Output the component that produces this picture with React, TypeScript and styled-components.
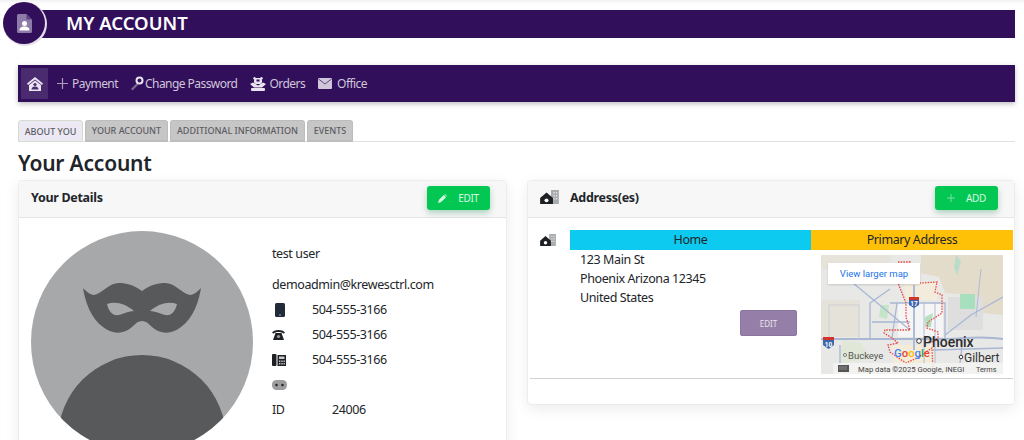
import React from "react";
import styled, { createGlobalStyle } from "styled-components";

const PURPLE = "#320f5a";
const INK = "#212529";
const FONT = '"Noto Sans", "Open Sans", sans-serif';

const GlobalStyle = createGlobalStyle`
  html, body {
    margin: 0;
    height: 440px;
    overflow: hidden;
    background: #fff;
  }
  body {
    font-family: ${FONT};
    color: ${INK};
    box-shadow: inset 0 4px 4px -3px rgba(0, 0, 0, 0.08);
  }
  * {
    box-sizing: border-box;
  }
  svg {
    display: block;
  }
`;

const DocPersonIcon = () => (
  <svg width="15" height="19" viewBox="0 0 15 19">
    <path d="M1.500 0H9.500L15 5.500V17.500a1.500 1.500 0 0 1-1.500 1.500H1.500A1.500 1.500 0 0 1 0 17.500V1.500A1.500 1.500 0 0 1 1.500 0Z" fill="#8f7ba9" />
    <path d="M9.500 0V5.500H15Z" fill="#5d4480" />
    <circle cx="7.500" cy="9.500" r="2.500" fill="#fff" />
    <path d="M2.500 16.500c0-3 2-4 5-4s5 1 5 4Z" fill="#fff" />
  </svg>
);

const HomeIcon = () => (
  <svg width="16" height="14" viewBox="0 0 16 14">
    <path d="M8 0 16 6.500 15 8 8 2.500 1 8 0 6.500Z" fill="#e9e4f0" />
    <path d="M8 3.500 14 8V14H2V8Z" fill="#e9e4f0" />
    <circle cx="8" cy="7.500" r="1.600" fill="#4a2b70" />
    <path d="M4.500 12.500c0-2 1.500-3 3.500-3s3.500 1 3.500 3Z" fill="#4a2b70" />
  </svg>
);

const PlusIcon = ({ color, size }: { color: string; size: number }) => (
  <svg width={size} height={size} viewBox="0 0 12 12">
    <path d="M6 0V12M0 6H12" stroke={color} strokeWidth="1.300" />
  </svg>
);

const KeyIcon = () => (
  <svg width="14" height="15" viewBox="0 0 14 15">
    <path d="M7 7 1 13l1.500 1.500L8.500 8.500Z" fill="#7d6b93" />
    <circle cx="9.500" cy="4.500" r="3" fill="none" stroke="#e9e4f0" strokeWidth="2" />
  </svg>
);

const OrdersIcon = () => (
  <svg width="16" height="14" viewBox="0 0 16 14">
    <circle cx="4.500" cy="1.200" r="1.200" fill="#e9e4f0" />
    <circle cx="11.500" cy="1.200" r="1.200" fill="#e9e4f0" />
    <rect x="4" y="1" width="8" height="6" rx="2" fill="#e9e4f0" />
    <rect x="6.500" y="2.500" width="3" height="2" fill="#320f5a" />
    <path d="M0 7 3 5.500 8 8.500 13 5.500 16 7 12 10.500H4Z" fill="#e9e4f0" />
    <rect x="1" y="11" width="14" height="3" rx="1" fill="#e9e4f0" />
  </svg>
);

const MailIcon = () => (
  <svg width="14" height="11" viewBox="0 0 14 11">
    <rect width="14" height="11" rx="1" fill="#cfc6db" />
    <path d="M0.500 1 7 6 13.500 1" fill="none" stroke="#320f5a" strokeWidth="0.700" />
  </svg>
);

const PencilIcon = () => (
  <svg width="9" height="9" viewBox="0 0 9 9">
    <path d="M0 9 1 5.800 5.800 1 8 3.200 3.200 8Z" fill="#d8f7e3" />
    <path d="M6.400 0.400 7 0 9 2 8.600 2.600Z" fill="#d8f7e3" />
  </svg>
);

const BuildingsIcon = ({ width }: { width: number }) => (
  <svg width={width} height={width * 0.78} viewBox="0 0 19 15">
    <rect x="11" y="0" width="8" height="15" fill="#a9abad" />
    <path d="M13.500 2h1.300v1.600h-1.300zM16 2h1.300v1.600H16zM13.500 5h1.300v1.600h-1.300zM16 5h1.300v1.600H16zM13.500 8h1.300v1.600h-1.300zM16 8h1.300v1.600H16z" fill="#e3e4e5" />
    <path d="M6.500 2.500 13 8V15H0V8Z" fill="#1d2024" />
    <circle cx="6.500" cy="10.500" r="2" fill="#fff" />
  </svg>
);

const MobileIcon = () => (
  <svg width="13" height="14" viewBox="0 0 13 14">
    <rect x="3" width="10" height="14" rx="1.500" fill="#212a38" />
    <rect x="7" y="11.500" width="2" height="1" fill="#aab" />
  </svg>
);

const RotaryIcon = () => (
  <svg width="13" height="11" viewBox="0 0 13 11">
    <path d="M0 4C1 0 12 0 13 4L11 4.500C10 2.500 3 2.500 2 4.500Z" fill="#1d2024" />
    <path d="M3.500 4h6L12 11H1Z" fill="#1d2024" />
    <circle cx="6.500" cy="7.500" r="1.600" fill="#9a9a9a" />
  </svg>
);

const DeskPhoneIcon = () => (
  <svg width="14" height="12" viewBox="0 0 14 12">
    <rect width="4.500" height="12" rx="1" fill="#1d2024" />
    <rect x="5.500" y="1" width="8.500" height="11" fill="#1d2024" />
    <rect x="7" y="2.500" width="5.500" height="2.500" fill="#c9c9c9" />
    <path d="M7 6.500h1.400v1.400H7zM9.300 6.500h1.400v1.400H9.300zM11.500 6.500h1.400v1.400h-1.400zM7 9h1.400v1.400H7zM9.300 9h1.400v1.400H9.300zM11.500 9h1.400v1.400h-1.400z" fill="#c9c9c9" />
  </svg>
);

const EyesIcon = () => (
  <svg width="15" height="10" viewBox="0 0 15 10">
    <rect width="15" height="10" rx="4.500" fill="#9d9d9f" />
    <circle cx="4.500" cy="5" r="1.300" fill="#26282c" />
    <circle cx="10.500" cy="5" r="1.300" fill="#26282c" />
  </svg>
);

const AvatarArt = () => (
  <svg width="222" height="222" viewBox="0 0 222 222">
    <defs>
      <clipPath id="avatar-clip">
        <circle cx="111" cy="111" r="111" />
      </clipPath>
    </defs>
    <g clipPath="url(#avatar-clip)">
      <rect width="222" height="222" fill="#a7a8aa" />
      <circle cx="111" cy="208" r="84" fill="#58595b" />
    </g>
    <path
      d="M111 60C103 54 95 52 88 52C78 52 72 62 63 64C59 64 55 60 52 57C54 70 60 88 72 96C82 104 93 103 101 96C105 92 107 90 111 90C115 90 117 92 121 96C129 103 140 104 150 96C162 88 168 70 170 57C167 60 163 64 159 64C150 62 144 52 134 52C127 52 119 54 111 60Z"
      fill="#58595b"
    />
    <path d="M76 73C84 70 94 72 103 80C96 80 90 85 84 84C80 83 77 78 76 73Z" fill="#a7a8aa" />
    <path d="M146 73C138 70 128 72 119 80C126 80 132 85 138 84C142 83 145 78 146 73Z" fill="#a7a8aa" />
  </svg>
);

// the embedded map: base areas, roads, city limit, then labels
const MapArt = () => (
  <svg width="182" height="119" viewBox="0 0 182 119" fontFamily='"Roboto", sans-serif'>
    <rect width="182" height="119" fill="#e8e8e6" />
    <path d="M100 0H182V60L160 58 150 40 124 38 118 22 100 18Z" fill="#e3dccb" />
    <path d="M0 0H70V6L40 14 0 14Z" fill="#e6e3da" />
    <path d="M0 45H39V82H0Z" fill="#e5e2da" />
    <path d="M127 42H162V75H127Z" fill="#dedede" />
    <rect x="139" y="39" width="15" height="15" fill="#a8e0bf" />
    <path d="M84 27H116V45H84Z" fill="#f3ecdc" />
    <path d="M77 48H122V82H77Z" fill="#f5f5f5" />
    <path d="M60 50 68 50 66 64 58 62Z" fill="#c4e6c6" />
    <path d="M104 62 112 58 110 72 104 72Z" fill="#b4e2c0" />
    <path d="M72 90H112V108H72Z" fill="#f4ecd8" />
    <path d="M22 85 40 88 50 104 18 108Z" fill="#e0e7d7" />
    <path d="M135 0 140 6 136 20 133 12Z" fill="#b9dcc8" />
    <g fill="none" stroke="#a9b7d4" strokeWidth="1.300">
      <path d="M0 84H120C140 84 160 80 182 84" strokeWidth="2" />
      <path d="M32 28 89 75" />
      <path d="M49 83V48L69 34M69 48H124V84" />
      <path d="M51 67H89M76 48 71 83" />
      <path d="M93 30V95" strokeWidth="1.800" />
      <path d="M103 48V108M114 48V108" strokeWidth="0.900" />
      <path d="M124 80 150 60 182 42" />
      <path d="M19 90V108M112 95 182 93M142 84 139 108" />
      <path d="M160 14 155 62" strokeWidth="0.900" />
      <path d="M8 50H38V84M8 50V84" stroke="#cbced3" strokeWidth="0.900" />
    </g>
    <g fill="none" stroke="#e9473f" strokeWidth="1.300" strokeDasharray="1.500 1.200">
      <path d="M77 7 89 7 87 15 77 28 81 38 85 48 85 62 89 75 64 75 63 78 71 83 77 88 67 90 69 97 76 102 85 108 96 103 111 93 112 118" />
      <path d="M77 28 85 28 99 28 116 27 114 37 121 40 121 58 107 67 106 73 117 77 117 83 109 88" />
    </g>
    <path d="M88 42H98V50L93 53 88 50Z" fill="#3c67ad" />
    <rect x="88" y="42" width="10" height="3" fill="#d0342c" />
    <path d="M2 82H13V90L7.500 94 2 90Z" fill="#3c67ad" />
    <rect x="2" y="82" width="11" height="3" fill="#d0342c" />
    <text x="93" y="51" fontSize="6.500" fontWeight="700" fill="#fff" textAnchor="middle">17</text>
    <text x="7.500" y="91.500" fontSize="6.500" fontWeight="700" fill="#fff" textAnchor="middle">10</text>
    <circle cx="98" cy="86" r="2.300" fill="#fff" stroke="#333" />
    <text x="102" y="92" fontSize="14" fontWeight="500" fill="#2c2c2c">Phoenix</text>
    <circle cx="24" cy="100" r="1.500" fill="#fff" stroke="#555" strokeWidth="0.800" />
    <text x="27" y="104" fontSize="9.500" fill="#555">Buckeye</text>
    <circle cx="140" cy="102" r="1.800" fill="#fff" stroke="#333" />
    <text x="143" y="107" fontSize="12" fill="#333">Gilbert</text>
    <text x="73" y="102" fontSize="11.300" fontWeight="500">
      <tspan fill="#4285f4">G</tspan>
      <tspan fill="#ea4335">o</tspan>
      <tspan fill="#fbbc05">o</tspan>
      <tspan fill="#4285f4">g</tspan>
      <tspan fill="#34a853">l</tspan>
      <tspan fill="#ea4335">e</tspan>
    </text>
    <rect x="12" y="108" width="170" height="11" fill="#f3f3f1" opacity="0.850" />
    <rect x="17" y="110" width="11" height="7" fill="#555" />
    <path d="M18.500 112h8M18.500 114h8" stroke="#eee" strokeWidth="0.700" strokeDasharray="1 1" />
    <text x="37" y="116.500" fontSize="7.700" fill="#444">Map data ©2025 Google, INEGI</text>
    <text x="155" y="116.500" fontSize="7.300" fill="#444">Terms</text>
  </svg>
);

const Header = styled.header`
  height: 28px;
  margin: 10px 9px 0 18px;
  padding: 0 0 3px 48px;
  display: flex;
  align-items: center;
  position: relative;
  background: ${PURPLE};
  color: #fff;
  font-size: 18.500px;
  font-weight: 600;
`;

const HeaderBadge = styled.div`
  position: absolute;
  left: -15px;
  top: -8px;
  width: 42px;
  height: 42px;
  border-radius: 50%;
  display: flex;
  align-items: center;
  justify-content: center;
  background: ${PURPLE};
  box-shadow: 1px 1px 0 1px #e4dfea;
`;

const NavBar = styled.nav`
  height: 37px;
  margin: 27px 9px 0 18px;
  padding: 3px;
  display: flex;
  align-items: stretch;
  background: ${PURPLE};
  box-shadow: 0 2px 5px rgba(0, 0, 0, 0.25);
`;

const NavHome = styled.div`
  width: 27px;
  display: flex;
  align-items: center;
  justify-content: center;
  background: #4a2b70;
`;

const NavItem = styled.a<{ $gap: number; $left: number }>`
  margin-left: ${({ $left }) => $left}px;
  display: flex;
  align-items: center;
  gap: ${({ $gap }) => $gap}px;
  color: #cfc6db;
  font-size: 12px;
  letter-spacing: -0.550px;
`;

const Tabs = styled.div`
  height: 22px;
  margin: 18px 9px 0 18px;
  display: flex;
  gap: 2px;
  border-bottom: 1px solid #dee2e6;
`;

const Tab = styled.div<{ $active?: boolean; $width: number }>`
  width: ${({ $width }) => $width}px;
  height: 22px;
  display: flex;
  align-items: center;
  justify-content: center;
  border: 1px solid ${({ $active }) => ($active ? "#d4dccf" : "#bdbdbd")};
  border-bottom-width: ${({ $active }) => ($active ? "1px" : "2px")};
  border-radius: 3px 3px 0 0;
  background: ${({ $active }) => ($active ? "#ece9f4" : "#c6c6c6")};
  color: #5c5c62;
  font-size: 9px;
  font-weight: 500;
  white-space: nowrap;
`;

const PageTitle = styled.h2`
  margin: 6px 0 0 18px;
  height: 32px;
  font-size: 21px;
  line-height: 30px;
  font-weight: 600;
  letter-spacing: -0.200px;
`;

const Columns = styled.main`
  margin: 0 9px 0 18px;
  display: grid;
  grid-template-columns: 489px 488px;
  gap: 20px;
  align-items: start;
`;

const Card = styled.section`
  background: #fff;
  border: 1px solid #eceded;
  border-radius: 4px;
  box-shadow: 0 4px 14px rgba(0, 0, 0, 0.08);
  overflow: hidden;
`;

const CardHead = styled.div`
  height: 37px;
  padding: 5px 16px 0 12px;
  display: flex;
  justify-content: space-between;
  background: #f7f7f7;
  border-bottom: 1px solid #e6e6e6;
`;

const CardTitle = styled.div`
  display: flex;
  align-items: center;
  gap: 11px;
  height: 22px;
  font-size: 12.500px;
  font-weight: 700;
  letter-spacing: -0.300px;
`;

const GreenButton = styled.button`
  width: 63px;
  height: 24px;
  display: flex;
  align-items: center;
  justify-content: center;
  gap: 11px;
  padding: 0;
  border: 0;
  border-radius: 3px;
  background: #02c853;
  color: #d8f7e3;
  font-family: ${FONT};
  font-size: 10px;
  letter-spacing: -0.300px;
  box-shadow: 0 3px 6px rgba(0, 120, 60, 0.3);
`;

const DetailsBody = styled.div`
  padding: 13px 0 0 12px;
  display: flex;
  gap: 19px;
`;

const DetailList = styled.div`
  padding-top: 12px;
  font-size: 12.500px;
  letter-spacing: -0.400px;
`;

const DetailLine = styled.div<{ $height: number; $top?: number }>`
  height: ${({ $height }) => $height}px;
  margin-top: ${({ $top }) => $top ?? 0}px;
  display: flex;
  align-items: center;
`;

const DetailIcon = styled.span<{ $width: number }>`
  width: ${({ $width }) => $width}px;
  display: flex;
  align-items: center;
`;

const AddressBody = styled.div`
  padding: 12px 1px 25px 2px;
`;

const AddressRow = styled.div`
  display: grid;
  grid-template-columns: 40px 1fr;
  padding-bottom: 4px;
  border-bottom: 1px solid #d2d2d2;
`;

const AddressIconCell = styled.div`
  padding: 4px 0 0 10px;
`;

const Banner = styled.div`
  display: grid;
  grid-template-columns: 241px 202px;
  height: 20px;
  font-size: 12.500px;
  line-height: 20px;
  text-align: center;
  letter-spacing: -0.400px;
`;

const BannerCell = styled.div<{ $bg: string }>`
  background: ${({ $bg }) => $bg};
`;

const AddressContent = styled.div`
  display: grid;
  grid-template-columns: 251px 182px;
  padding-top: 5px;
`;

const AddressText = styled.div`
  padding-left: 10px;
  font-size: 12.500px;
  line-height: 19px;
  letter-spacing: -0.400px;
`;

const AddressLines = styled.div`
  margin-top: -5px;
`;

const PurpleButton = styled.button`
  display: block;
  width: 57px;
  height: 26px;
  margin: 3px 0 0 160px;
  border: 1px solid #8b769f;
  border-radius: 2px;
  background: #957fa8;
  color: #e8e2ee;
  font-family: ${FONT};
  font-size: 8px;
`;

const MapFrame = styled.div`
  position: relative;
  width: 182px;
  height: 119px;
`;

const MapLink = styled.a`
  position: absolute;
  left: 7px;
  top: 8px;
  width: 92px;
  height: 21px;
  display: flex;
  align-items: center;
  justify-content: center;
  background: #fff;
  color: #1a73e8;
  font-family: "Roboto", sans-serif;
  font-size: 9.500px;
  box-shadow: 0 1px 2px rgba(0, 0, 0, 0.15);
`;

const App = () => (
  <>
    <GlobalStyle />
    <Header>
      <HeaderBadge>
        <DocPersonIcon />
      </HeaderBadge>
      MY ACCOUNT
    </Header>
    <NavBar>
      <NavHome>
        <HomeIcon />
      </NavHome>
      <NavItem $gap={4} $left={9}>
        <PlusIcon color="#a89cb8" size={11} />
        Payment
      </NavItem>
      <NavItem $gap={1} $left={12}>
        <KeyIcon />
        Change Password
      </NavItem>
      <NavItem $gap={3} $left={13}>
        <OrdersIcon />
        Orders
      </NavItem>
      <NavItem $gap={5} $left={13}>
        <MailIcon />
        Office
      </NavItem>
    </NavBar>
    <Tabs>
      <Tab $active $width={65}>ABOUT YOU</Tab>
      <Tab $width={83}>YOUR ACCOUNT</Tab>
      <Tab $width={135}>ADDITIONAL INFORMATION</Tab>
      <Tab $width={46}>EVENTS</Tab>
    </Tabs>
    <PageTitle>Your Account</PageTitle>
    <Columns>
      <Card>
        <CardHead>
          <CardTitle>Your Details</CardTitle>
          <GreenButton>
            <PencilIcon />
            EDIT
          </GreenButton>
        </CardHead>
        <DetailsBody>
          <AvatarArt />
          <DetailList>
            <DetailLine $height={20}>test user</DetailLine>
            <DetailLine $height={25} $top={9}>demoadmin@krewesctrl.com</DetailLine>
            <DetailLine $height={25}><DetailIcon $width={40}><MobileIcon /></DetailIcon>504-555-3166</DetailLine>
            <DetailLine $height={25}><DetailIcon $width={40}><RotaryIcon /></DetailIcon>504-555-3166</DetailLine>
            <DetailLine $height={25}><DetailIcon $width={40}><DeskPhoneIcon /></DetailIcon>504-555-3166</DetailLine>
            <DetailLine $height={25}><DetailIcon $width={40}><EyesIcon /></DetailIcon></DetailLine>
            <DetailLine $height={25}><DetailIcon $width={60}>ID</DetailIcon>24006</DetailLine>
          </DetailList>
        </DetailsBody>
      </Card>
      <Card>
        <CardHead>
          <CardTitle>
            <BuildingsIcon width={19} />
            Address(es)
          </CardTitle>
          <GreenButton>
            <PlusIcon color="#7fe3a8" size={8} />
            ADD
          </GreenButton>
        </CardHead>
        <AddressBody>
          <AddressRow>
            <AddressIconCell>
              <BuildingsIcon width={16} />
            </AddressIconCell>
            <div>
              <Banner>
                <BannerCell $bg="#0dcaf0">Home</BannerCell>
                <BannerCell $bg="#ffc107">Primary Address</BannerCell>
              </Banner>
              <AddressContent>
                <AddressText>
                  <AddressLines>
                    <div>123 Main St</div>
                    <div>Phoenix Arizona 12345</div>
                    <div>United States</div>
                  </AddressLines>
                  <PurpleButton>EDIT</PurpleButton>
                </AddressText>
                <MapFrame>
                  <MapArt />
                  <MapLink>View larger map</MapLink>
                </MapFrame>
              </AddressContent>
            </div>
          </AddressRow>
        </AddressBody>
      </Card>
    </Columns>
  </>
);

export default App;
